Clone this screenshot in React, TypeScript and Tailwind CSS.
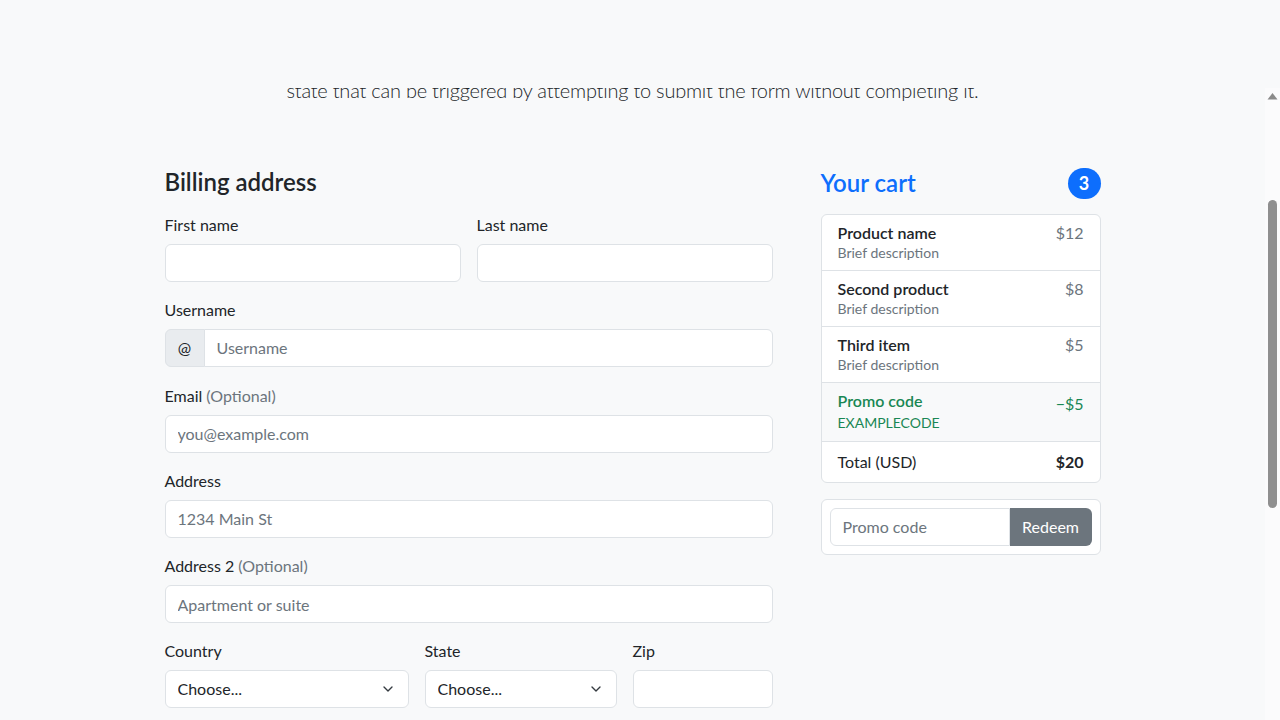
import { ChevronDown } from "lucide-react";

type CartItem = {
    name: string;
    desc: string;
    price: string;
};

const items: CartItem[] = [
    { name: "Product name", desc: "Brief description", price: "$12" },
    { name: "Second product", desc: "Brief description", price: "$8" },
    { name: "Third item", desc: "Brief description", price: "$5" },
];

function Field({
    label,
    optional,
    placeholder,
}: {
    label: string;
    optional?: boolean;
    placeholder?: string;
}) {
    return (
        <div className="flex flex-col">
            <label className="mb-[7px] mt-px leading-6">
                {label}
                {optional && <span className="text-[#6c757d]"> (Optional)</span>}
            </label>
            <input
                placeholder={placeholder}
                className="h-[38px] w-full rounded-md border border-[#dee2e6] bg-white px-3 text-base outline-none placeholder:text-[#6c757d]"
            />
        </div>
    );
}

function SelectField({ label }: { label: string }) {
    return (
        <div className="flex flex-col">
            <label className="mb-[7px] mt-px leading-6">{label}</label>
            <div className="relative">
                <select className="h-[38px] w-full appearance-none rounded-md border border-[#dee2e6] bg-white px-3 text-base text-[#212529] outline-none">
                    <option>Choose...</option>
                </select>
                <ChevronDown
                    size={16}
                    strokeWidth={2}
                    className="pointer-events-none absolute right-[13px] top-[11px] text-[#343a40]"
                />
            </div>
        </div>
    );
}

export default function App() {
    return (
        <div className="flex h-[720px] w-[1280px] flex-col overflow-hidden bg-[#f8f9fa] font-['Lato','Liberation_Sans',sans-serif] text-base text-[#212529]">
            <div className="h-[88px] shrink-0" />

            <div className="flex min-h-0 flex-1">
                {/* page (scrolled) */}
                <div className="flex-1 overflow-hidden">
                    <div className="mx-auto w-[936px]">
                        <p className="-mt-[13px] text-center text-[20px] font-light leading-[30px] tracking-[-0.23px]">
                            state that can be triggered by attempting to submit the form without completing it.
                        </p>

                        <div className="mt-[63px] flex gap-12">
                            {/* ===== billing ===== */}
                            <div className="w-[608px]">
                                <h4 className="mb-4 text-[24px] font-semibold leading-[28px]">Billing address</h4>

                                <div className="grid grid-cols-12 gap-x-4 gap-y-[15.25px]">
                                    <div className="col-span-6">
                                        <Field label="First name" />
                                    </div>
                                    <div className="col-span-6">
                                        <Field label="Last name" />
                                    </div>

                                    <div className="col-span-12 flex flex-col">
                                        <label className="mb-[7px] mt-px leading-6">Username</label>
                                        <div className="flex h-[38px]">
                                            <span className="flex w-10 items-center justify-center rounded-l-md border border-[#dee2e6] bg-[#e9ecef]">
                                                @
                                            </span>
                                            <input
                                                placeholder="Username"
                                                className="-ml-px flex-1 rounded-r-md border border-[#dee2e6] bg-white px-3 outline-none placeholder:text-[#6c757d]"
                                            />
                                        </div>
                                    </div>

                                    <div className="col-span-12">
                                        <Field label="Email" optional placeholder="you@example.com" />
                                    </div>
                                    <div className="col-span-12">
                                        <Field label="Address" placeholder="1234 Main St" />
                                    </div>
                                    <div className="col-span-12">
                                        <Field label="Address 2" optional placeholder="Apartment or suite" />
                                    </div>

                                    <div className="col-span-5">
                                        <SelectField label="Country" />
                                    </div>
                                    <div className="col-span-4">
                                        <SelectField label="State" />
                                    </div>
                                    <div className="col-span-3">
                                        <Field label="Zip" />
                                    </div>
                                </div>
                            </div>

                            {/* ===== cart ===== */}
                            <div className="w-[280px]">
                                <h4 className="mb-4 flex h-[30px] items-center justify-between text-[24px] font-semibold text-[#0d6efd]">
                                    <span>Your cart</span>
                                    <span className="flex h-[31px] w-[33px] items-center justify-center rounded-full bg-[#0d6efd] text-[18px] font-bold leading-none text-white">
                                        3
                                    </span>
                                </h4>

                                <ul className="mb-4 overflow-hidden rounded-md border border-[#dee2e6] bg-white">
                                    {items.map((it) => (
                                        <li
                                            key={it.name}
                                            className="flex justify-between border-b border-[#dee2e6] px-4 pb-[7px] pt-2"
                                        >
                                            <div>
                                                <h6 className="text-base font-semibold leading-[19px]">{it.name}</h6>
                                                <small className="block pt-px text-sm leading-[20px] text-[#6c757d]">{it.desc}</small>
                                            </div>
                                            <span className="leading-[19px] text-[#6c757d]">{it.price}</span>
                                        </li>
                                    ))}
                                    <li className="flex justify-between border-b border-[#dee2e6] bg-[#f8f9fa] px-4 pb-[7px] pt-2 text-[#198754]">
                                        <div>
                                            <h6 className="text-base font-semibold leading-[19px]">Promo code</h6>
                                            <div className="leading-6">
                                                <small className="text-sm">EXAMPLECODE</small>
                                            </div>
                                        </div>
                                        <span className="mt-px leading-6">−$5</span>
                                    </li>
                                    <li className="flex justify-between px-4 py-2 leading-6">
                                        <span>Total (USD)</span>
                                        <strong className="font-bold">$20</strong>
                                    </li>
                                </ul>

                                <div className="rounded-md border border-[#dee2e6] bg-white p-2">
                                    <div className="flex h-[38px]">
                                        <input
                                            placeholder="Promo code"
                                            className="w-[180px] rounded-l-md border border-[#dee2e6] bg-white px-3 outline-none placeholder:text-[#6c757d]"
                                        />
                                        <button className="flex-1 rounded-r-md bg-[#6c757d] px-3 text-white">Redeem</button>
                                    </div>
                                </div>
                            </div>
                        </div>
                    </div>
                </div>

                {/* scrollbar */}
                <div className="flex w-[15px] shrink-0 flex-col bg-[#fbfbfc]">
                    <svg width="15" height="8" viewBox="0 0 15 8" className="mt-[4px]">
                        <polygon points="2.5,7.5 7.5,1 12.5,7.5" fill="#8a8a8a" />
                    </svg>
                    <div className="ml-[3px] mt-[100px] h-[308px] w-[9px] rounded-full bg-[#8f8f8f]" />
                </div>
            </div>
        </div>
    );
}
